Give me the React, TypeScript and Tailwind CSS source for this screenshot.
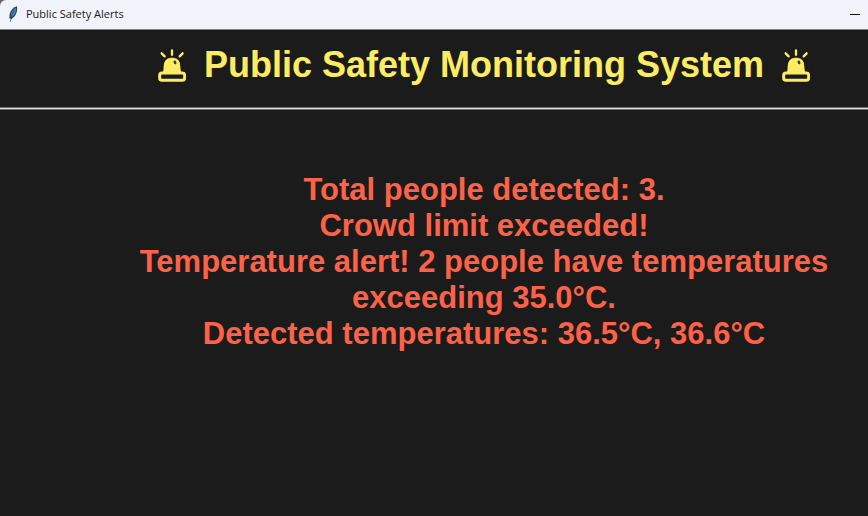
function FeatherIcon() {
  return (
    <svg viewBox="0 0 30 48" className="h-4 w-[10px]" aria-hidden="true">
      <path d="M27 1 C17 4 8 13 5 24 L4 37 L11 38 C22 32 29 20 27 1 Z" fill="#2b3c50" />
      <path d="M24 5 C15 10 9 18 8 32 L12 33 C20 27 25 17 24 5 Z" fill="#5a8fc0" />
      <path d="M20 12 C15 19 11 28 7 46" fill="none" stroke="#1c2530" strokeWidth="2" strokeLinecap="round" />
    </svg>
  );
}

function SirenIcon() {
  return (
    <svg viewBox="24 29 84 99" className="h-[33px] w-7 shrink-0 text-[#fcec64]" aria-hidden="true">
      <g fill="none" stroke="currentColor" strokeLinecap="round" strokeWidth="7">
        <path d="M66 33 V46 M35 42 L44 51 M98 42 L89 51" />
      </g>
      <path
        d="M37 102 C42 93 40 84 42 73 C45 61 53 55 66 55 C79 55 88 61 90 73 C92 84 90 93 96 102 Z"
        fill="currentColor"
      />
      <rect x="29" y="101" width="75" height="22" rx="7" fill="#1b1b1b" stroke="currentColor" strokeWidth="9" />
      <ellipse cx="75" cy="69" rx="4" ry="6" transform="rotate(-25 75 69)" fill="#3b381d" />
    </svg>
  );
}

const messages = [
  "Total people detected: 3.",
  "Crowd limit exceeded!",
  "Temperature alert! 2 people have temperatures exceeding 35.0°C.",
  "Detected temperatures: 36.5°C, 36.6°C",
];

export default function App() {
  return (
    <div className="flex min-h-screen flex-col overflow-hidden bg-[#1b1b1b] font-['Liberation_Sans',Arial,sans-serif]">
      <div className="bg-[#66666b]">
        <header className="flex h-[30px] items-center justify-between rounded-tl-md border-b border-[#7c807f] bg-[#f1f3fa] pr-2 pb-px pl-2">
          <div className="flex items-center gap-2">
            <FeatherIcon />
            <span className="font-['Open_Sans','Noto_Sans',sans-serif] text-[11px] leading-4 text-[#191919]">
              Public Safety Alerts
            </span>
          </div>
          <button type="button" aria-label="Minimize" className="flex h-4 w-[10px] items-center">
            <span className="h-px w-full bg-[#111111]" />
          </button>
        </header>
      </div>

      <div className="flex items-center justify-center gap-[18px] pt-[11px] pb-[18px] pl-[100px]">
        <SirenIcon />
        <h1 className="text-4xl leading-[48px] font-bold whitespace-nowrap text-[#fcec64]">
          Public Safety Monitoring System
        </h1>
        <SirenIcon />
      </div>
      <hr className="h-[3px] border-y border-[#696969] bg-[#e4e4e4]" />

      <main className="flex justify-center pt-[62px] pl-[100px]">
        <div className="max-w-[720px] text-center text-[31px] leading-9 font-bold text-[#fb6248]">
          {messages.map((message) => (
            <p key={message}>{message}</p>
          ))}
        </div>
      </main>
    </div>
  );
}
